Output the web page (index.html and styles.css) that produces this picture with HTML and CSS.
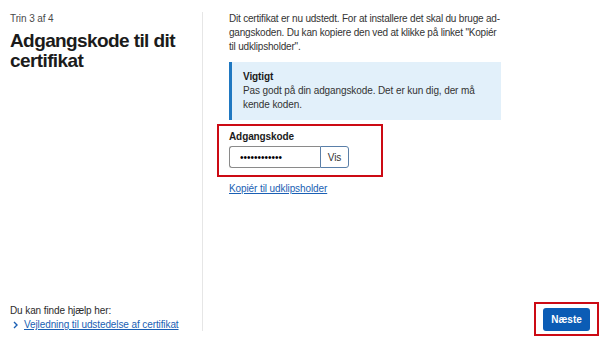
FILE: index.html
```html
<!DOCTYPE html>
<html>
<head>
    <title>Adgangskode til dit certifikat</title>
    <link rel="stylesheet" href="styles.css">
</head>
<body>
    <div class="page">
        <div class="side">
            <div class="side-top">
                <div class="step">Trin 3 af 4</div>
                <h1>Adgangskode til dit certifikat</h1>
            </div>
            <div class="help">
                <div>Du kan finde hjælp her:</div>
                <a class="help-link" href="#">
                    <svg width="6" height="8" viewBox="0 0 6 8"><path d="M1 1l3 3-3 3" fill="none" stroke="#1a5fb4" stroke-width="1.4"/></svg>
                    <span>Vejledning til udstedelse af certifikat</span>
                </a>
            </div>
        </div>
        <div class="main">
            <div class="content">
                <p class="intro">Dit certifikat er nu udstedt. For at installere det skal du bruge ad&shy;gangskoden. Du kan kopiere den ved at klikke på linket "Kopiér til udklipsholder".</p>
                <div class="notice">
                    <strong>Vigtigt</strong>
                    <div>Pas godt på din adgangskode. Det er kun dig, der må kende koden.</div>
                </div>
                <div class="highlight field">
                    <label for="code">Adgangskode</label>
                    <div class="input-row">
                        <input id="code" type="password" value="abcdefghijkl">
                        <button class="show-button">Vis</button>
                    </div>
                </div>
                <a class="copy-link" href="#">Kopiér til udklipsholder</a>
            </div>
            <div class="actions">
                <div class="highlight next-wrap">
                    <button class="next-button">Næste</button>
                </div>
            </div>
        </div>
    </div>
</body>
</html>
```

FILE: styles.css
```css
body {
    font-family: 'Liberation Sans', Arial, sans-serif;
    font-size: 10px;
    letter-spacing: -0.1px;
    line-height: 14px;
    color: #2b2b2b;
    background-color: #fff;
    margin: 0;
    padding: 0;
}
.page {
    display: flex;
    height: 343px;
    box-sizing: border-box;
    padding: 12px 0 7px 0;
}
.side {
    width: 203px;
    box-sizing: border-box;
    padding: 0 10px;
    margin-bottom: 5px;
    border-right: 1px solid #e6e6e6;
    display: flex;
    flex-direction: column;
    justify-content: space-between;
}
.step {
    color: #4a4a4a;
}
h1 {
    font-size: 19px;
    line-height: 20px;
    letter-spacing: -0.6px;
    margin: 5px 0 0 0;
    color: #1b1b1b;
}
.help {
    margin-bottom: -1px;
}
.help-link {
    display: flex;
    align-items: center;
    gap: 5px;
    padding-left: 3px;
    color: #1a5fb4;
}
.main {
    flex: 1;
    display: flex;
    flex-direction: column;
    justify-content: space-between;
    padding: 0 3px 0 26px;
}
.content {
    width: 272px;
}
.intro {
    margin: 0 0 8px 0;
    letter-spacing: -0.2px;
    color: #333;
}
.notice {
    background-color: #e2f0fa;
    border-left: 3px solid #1f78c1;
    padding: 8px 12px 8px 11px;
    color: #333;
}
.notice strong {
    display: block;
    color: #1b1b1b;
}
.highlight {
    border: 2px solid #cc0a14;
}
.field {
    display: inline-block;
    margin: 4px 0 0 -12px;
    padding: 4px 32px 7px 10px;
}
.field label {
    display: block;
    font-weight: bold;
    color: #1b1b1b;
    margin-bottom: 2px;
}
.input-row {
    display: flex;
}
input {
    width: 91px;
    height: 22px;
    box-sizing: border-box;
    border: 1px solid #8a8a8a;
    border-right: none;
    border-radius: 3px 0 0 3px;
    padding: 0 10px;
    font-size: 10px;
    font-family: inherit;
}
.show-button {
    width: 29px;
    height: 22px;
    box-sizing: border-box;
    border: 1px solid #5a7fa8;
    border-radius: 0 3px 3px 0;
    background-color: #fff;
    color: #333;
    font-size: 10px;
    font-family: inherit;
    padding: 0;
}
.copy-link {
    display: block;
    margin-top: 5px;
    color: #1a5fb4;
}
.actions {
    display: flex;
    justify-content: flex-end;
}
.next-wrap {
    display: flex;
    padding: 4px 7px 3px 7px;
}
.next-button {
    width: 47px;
    height: 23px;
    border: none;
    border-radius: 3px;
    background-color: #0b5cb5;
    color: #fff;
    font-weight: bold;
    font-size: 10px;
    font-family: inherit;
    padding: 0;
}
```
